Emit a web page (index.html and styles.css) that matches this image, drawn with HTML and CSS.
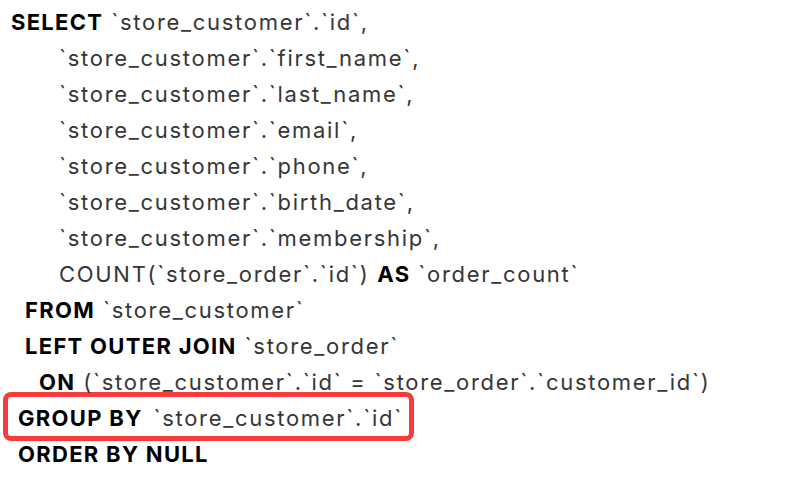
FILE: index.html
```html
<!DOCTYPE html>
<html>
<head>
<meta charset="utf-8">
<link rel="stylesheet" href="styles.css">
</head>
<body>
<div class="sql">
  <div class="line l0"><b>SELECT</b> `store_customer`.`id`,</div>
  <div class="line l4">`store_customer`.`first_name`,</div>
  <div class="line l4">`store_customer`.`last_name`,</div>
  <div class="line l4">`store_customer`.`email`,</div>
  <div class="line l4">`store_customer`.`phone`,</div>
  <div class="line l4">`store_customer`.`birth_date`,</div>
  <div class="line l4">`store_customer`.`membership`,</div>
  <div class="line l4">COUNT(`store_order`.`id`) <b>AS</b> `order_count`</div>
  <div class="line l1"><b>FROM</b> `store_customer`</div>
  <div class="line l1"><b>LEFT OUTER JOIN</b> `store_order`</div>
  <div class="line l2"><b>ON</b> (`store_customer`.`id` = `store_order`.`customer_id`)</div>
  <div class="line highlight"><b>GROUP BY</b> <span class="gap"></span>`store_customer`.`id`</div>
  <div class="line l05"><b>ORDER BY NULL</b></div>
</div>
</body>
</html>
```
FILE: styles.css
```css
html, body {
  margin: 0;
  padding: 0;
  background: #fff;
}
.sql {
  padding-top: 4px;
  font-family: Inter, "Noto Sans", sans-serif;
  font-size: 22px;
  line-height: 36px;
  color: #363636;
  letter-spacing: 1.7px;
}
.sql b {
  color: #000;
  font-weight: 700;
  letter-spacing: 1.3px;
}
.line {
  height: 36px;
  white-space: pre;
}
.l0 { padding-left: 11px; }
.l05 { padding-left: 18px; }
.l1 { padding-left: 25px; }
.l2 { padding-left: 39px; }
.l4 { padding-left: 59px; }
.gap {
  display: inline-block;
  width: 3px;
}
.highlight {
  width: fit-content;
  margin: -8px 0 -5px 3px;
  padding: 3px 6px 0 10px;
  border: 5px solid #f43c3c;
  border-radius: 8px;
}
```
